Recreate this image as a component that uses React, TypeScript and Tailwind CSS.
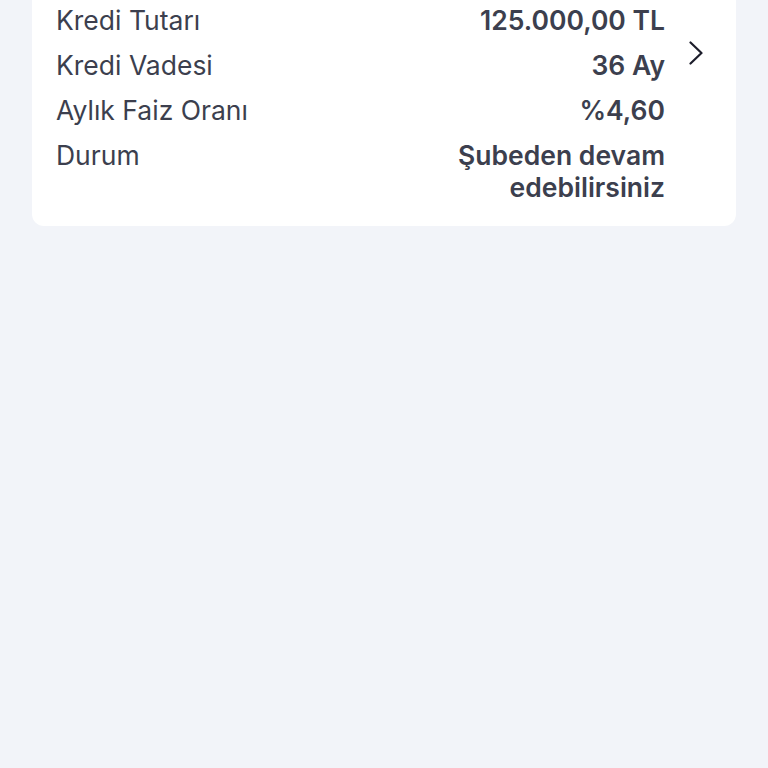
const rows = [
  { label: 'Kredi Tutarı', value: '125.000,00 TL' },
  { label: 'Kredi Vadesi', value: '36 Ay' },
  { label: 'Aylık Faiz Oranı', value: '%4,60' },
  { label: 'Durum', value: 'Şubeden devam edebilirsiniz' },
]

export default function App() {
  return (
    <div className="flow-root min-h-screen bg-[#f2f4f9] px-8 font-['Inter',sans-serif] text-[#3c3f4e]">
      <div className="-mt-[121px] flex items-center rounded-xl bg-white pl-6">
        <div className="flex flex-1 flex-col gap-[13px] pt-[125px] pb-[23px]">
          {rows.map((row) => (
            <div key={row.label} className="flex items-start justify-between gap-6 text-[26.5px] leading-[32px]">
              <span>{row.label}</span>
              <span className="max-w-[220px] text-right font-semibold">{row.value}</span>
            </div>
          ))}
        </div>
        <div className="flex w-[71px] pl-[23px]">
          <svg width="16" height="24" viewBox="0 0 16 24" fill="none" className="text-[#1c1d2b]">
            <path d="M2.5 1.5 L13.5 12 L2.5 22.5" stroke="currentColor" strokeWidth="2.2" strokeLinecap="round" strokeLinejoin="round" />
          </svg>
        </div>
      </div>
    </div>
  )
}
